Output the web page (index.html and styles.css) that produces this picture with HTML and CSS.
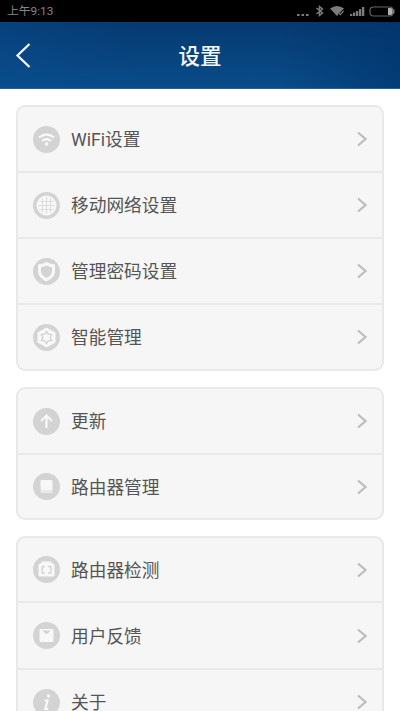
FILE: index.html
```html
<!DOCTYPE html>
<html lang="zh-CN">
<head>
<meta charset="utf-8">
<meta name="viewport" content="width=device-width, initial-scale=1">
<title>设置</title>
<link rel="stylesheet" href="styles.css">
</head>
<body>
<div class="status">
  <span class="time">上午9:13</span>
  <svg class="indicators" width="98" height="14" viewBox="0 0 98 14" fill="#7c7c7c">
    <path d="M0 10h2.600v2H0zM4.500 10h2.600v2H4.500zM9 10h2.600v2H9z"/>
    <path d="M19.500 4l6 5-3 2.500V2.500l3 2.500-6 5" fill="none" stroke="#7c7c7c" stroke-width="1.500"/>
    <path d="M33 4.500Q40-.5 47 4.500L40 12z"/>
    <path d="M42 9l1.400 1.600 3.200-3.800" fill="none" stroke="#000" stroke-width="2.600"/>
    <path d="M42 9l1.400 1.600 3.200-3.800" fill="none" stroke="#7c7c7c" stroke-width="1.300"/>
    <path d="M53 10h2.300v2H53zM56 8.500h2.300V12H56zM59 7h2.300v5H59zM62 5h2.300v7H62zM65 3h2.300v9H65z"/>
    <rect x="73" y="3" width="23" height="9" rx="3.500" fill="none" stroke="#666" stroke-width="1.200"/>
    <path d="M91 4h2.500q2 0 2 2v3q0 2-2 2H91z" fill="#b0b0b0"/>
    <path d="M96 5.500h1.500v4H96z"/>
  </svg>
</div>
<header class="header">
  <svg class="back" width="18" height="28" viewBox="0 0 18 28"><path d="M15.500 3L3.500 14.500 15.500 26" fill="none" stroke="#f4f8fc" stroke-width="2.300"/></svg>
  <h1 class="title">设置</h1>
</header>
<main class="content">
  <section class="card">
    <div class="row">
      <svg class="icon" viewBox="0 0 27 27"><circle class="disc" cx="13.500" cy="13.500" r="13.500"/><g class="line"><path d="M6 11.500q7.500-6 15 0M9 15q4.500-3.500 9 0"/></g><circle class="light" cx="13.500" cy="18" r="1.800"/></svg>
      <span class="label">WiFi设置</span><svg class="arrow" viewBox="0 0 10 16"><path d="M1 1.500l7.500 6.500L1 14.500"/></svg>
    </div>
    <div class="row">
      <svg class="icon" viewBox="0 0 27 27"><circle class="disc" cx="13.500" cy="13.500" r="13.500"/><circle class="light" cx="13.500" cy="13.500" r="10"/><g class="grid"><path d="M13.500 5v17M5 13.500h17M6.500 9.500h14M6.500 17.500h14M9.500 6.500v14M17.500 6.500v14"/></g></svg>
      <span class="label">移动网络设置</span><svg class="arrow" viewBox="0 0 10 16"><path d="M1 1.500l7.500 6.500L1 14.500"/></svg>
    </div>
    <div class="row">
      <svg class="icon" viewBox="0 0 27 27"><circle class="disc" cx="13.500" cy="13.500" r="13.500"/><path class="light" d="M13.500 4q4 2.300 8.500 2.500v6c0 5.500-3.500 8.500-8.500 11-5-2.500-8.500-5.500-8.500-11v-6q4.500-.2 8.500-2.500z"/><path class="disc" d="M13.500 7.500q2.800 1.500 5.500 1.500v4c0 3.200-2.500 5.500-5.500 7-3-1.500-5.500-3.800-5.500-7V9q2.700 0 5.500-1.500z"/></svg>
      <span class="label">管理密码设置</span><svg class="arrow" viewBox="0 0 10 16"><path d="M1 1.500l7.500 6.500L1 14.500"/></svg>
    </div>
    <div class="row">
      <svg class="icon" viewBox="0 0 27 27"><circle class="disc" cx="13.500" cy="13.500" r="13.500"/><path class="light" d="M13.500 3.500l9 5v10l-9 5-9-5v-10z"/><g class="detail"><path d="M13.500 7.500l1.800 2.700 3.400.3-1.500 3 1.500 3-3.400.3-1.800 2.700-1.800-2.700-3.400-.3 1.500-3-1.500-3 3.400-.3z"/></g></svg>
      <span class="label">智能管理</span><svg class="arrow" viewBox="0 0 10 16"><path d="M1 1.500l7.500 6.500L1 14.500"/></svg>
    </div>
  </section>
  <section class="card">
    <div class="row">
      <svg class="icon" viewBox="0 0 27 27"><circle class="disc" cx="13.500" cy="13.500" r="13.500"/><g class="line"><path d="M13.500 20V8M8 13l5.500-5.500L19 13"/></g></svg>
      <span class="label">更新</span><svg class="arrow" viewBox="0 0 10 16"><path d="M1 1.500l7.500 6.500L1 14.500"/></svg>
    </div>
    <div class="row short">
      <svg class="icon" viewBox="0 0 27 27"><circle class="disc" cx="13.500" cy="13.500" r="13.500"/><rect class="light" x="7.500" y="7" width="12" height="10" rx="1"/><path class="soft" d="M7.500 17h12v3h-12z"/></svg>
      <span class="label">路由器管理</span><svg class="arrow" viewBox="0 0 10 16"><path d="M1 1.500l7.500 6.500L1 14.500"/></svg>
    </div>
  </section>
  <section class="card">
    <div class="row short">
      <svg class="icon" viewBox="0 0 27 27"><circle class="disc" cx="13.500" cy="13.500" r="13.500"/><path class="light" d="M9 5.500h9l1 2h1q1.500 0 1.500 1.500v10q0 1.500-1.500 1.500H7q-1.500 0-1.500-1.500V9q0-1.500 1.500-1.500h1z"/><g class="detail"><path d="M12 10.500H9.200v6.500H12M15 10.500h2.800v6.500H15"/></g></svg>
      <span class="label">路由器检测</span><svg class="arrow" viewBox="0 0 10 16"><path d="M1 1.500l7.500 6.500L1 14.500"/></svg>
    </div>
    <div class="row tall">
      <svg class="icon" viewBox="0 0 27 27"><circle class="disc" cx="13.500" cy="13.500" r="13.500"/><rect class="light" x="6.500" y="7" width="14" height="13" rx="1"/><path class="disc" d="M9 8.500h9l-4.500 3.800z"/></svg>
      <span class="label">用户反馈</span><svg class="arrow" viewBox="0 0 10 16"><path d="M1 1.500l7.500 6.500L1 14.500"/></svg>
    </div>
    <div class="row">
      <svg class="icon" viewBox="0 0 27 27"><circle class="disc" cx="13.500" cy="13.500" r="13.500"/><circle class="light" cx="15.500" cy="7" r="1.700"/><g class="line"><path d="M11.500 11.500h3L12.300 20h3"/></g></svg>
      <span class="label">关于</span><svg class="arrow" viewBox="0 0 10 16"><path d="M1 1.500l7.500 6.500L1 14.500"/></svg>
    </div>
  </section>
</main>
</body>
</html>
```
FILE: styles.css
```css
* { box-sizing: border-box; }

body {
  margin: 0;
  height: 711px;
  overflow: hidden;
  background: #fff;
  color: #555;
  font-family: Roboto, "Noto Sans CJK SC", sans-serif;
}

.status {
  display: flex;
  align-items: center;
  justify-content: space-between;
  height: 22px;
  padding: 0 5px 0 7px;
  background: #000;
}

.time {
  color: #858585;
  font-size: 11.8px;
  line-height: 22px;
}

.indicators { display: block; }

.header {
  display: grid;
  grid-template-columns: 44px 1fr 44px;
  align-items: center;
  height: 67px;
  padding: 0 14px;
  background:
    linear-gradient(90deg, rgba(10, 80, 150, 0.3), rgba(10, 80, 150, 0) 35%, rgba(0, 50, 105, 0) 70%, rgba(0, 50, 105, 0.6)),
    linear-gradient(180deg, #063a70, #094c8a);
  border-bottom: 1px solid #24609a;
}

.title {
  margin: 0;
  padding-top: 3px;
  color: #f4f8fc;
  font-size: 21.5px;
  font-weight: 500;
  line-height: 32px;
  text-align: center;
}

.content {
  display: flex;
  flex-direction: column;
  gap: 16px;
  padding: 16px 16px 0;
}

.card {
  border: 2px solid #e9e9e9;
  border-radius: 9px;
  background: #f6f6f6;
}

.row {
  display: flex;
  align-items: center;
  height: 64px;
  padding: 0 15px;
}

.row + .row {
  height: 66px;
  border-top: 2px solid #e9e9e9;
}

.row.short { height: 63px; }
.row + .row.short { height: 65px; }
.row + .row.tall { height: 67px; }

.icon {
  width: 27px;
  height: 27px;
  flex: none;
}

.label {
  flex: 1;
  margin-left: 11px;
  padding-top: 2px;
  font-size: 17.7px;
  line-height: 26px;
}

.arrow {
  width: 10px;
  height: 16px;
  flex: none;
}

.arrow path {
  fill: none;
  stroke: #bdbdbd;
  stroke-width: 2.2;
}

.disc { fill: #d3d3d3; }
.light { fill: #f8f8f8; }
.soft { fill: #e9e9e9; }

.line {
  fill: none;
  stroke: #f8f8f8;
  stroke-width: 2.2;
}

.detail {
  fill: none;
  stroke: #d3d3d3;
  stroke-width: 1.4;
}

.grid {
  fill: none;
  stroke: #dcdcdc;
  stroke-width: 1;
}
```
